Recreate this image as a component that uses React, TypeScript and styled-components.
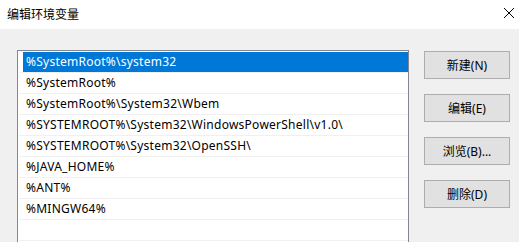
import React from "react";
import styled, { createGlobalStyle } from "styled-components";

const Global = createGlobalStyle`
  html, body { margin: 0; padding: 0; }
  body {
    background: #f0f0f0;
    font-family: "Noto Sans", "Noto Sans CJK SC", sans-serif;
    font-size: 12px;
    color: #000;
    overflow: hidden;
  }
`;

const Window = styled.div`
  width: 519px;
  height: 242px;
  display: flex;
  flex-direction: column;
  overflow: hidden;
`;

const TitleBar = styled.div`
  height: 29px;
  background: #fff;
  display: flex;
  align-items: center;
  justify-content: space-between;
  padding: 0 5px 0 7px;
  flex-shrink: 0;
`;

const Title = styled.span`
  font-size: 12px;
  line-height: 29px;
  font-family: "Noto Sans CJK SC", sans-serif;
  margin-top: -2px;
`;

const Close = styled.div`
  width: 10px;
  height: 10px;
  display: flex;
  margin-top: -3px;
`;

const Body = styled.div`
  display: flex;
  padding: 21px 0 0 17px;
  gap: 15px;
  flex: 1;
  min-height: 0;
`;

const ListBox = styled.div`
  width: 390px;
  height: 220px;
  border: 1px solid #828790;
  background: #fff;
  padding-top: 1px;
  box-sizing: content-box;
  flex-shrink: 0;
`;

const Row = styled.div`
  height: 20px;
  margin-left: 1px;
  border-bottom: 1px solid #f0f0f0;
  display: flex;
`;

const Cell = styled.div<{ $selected?: boolean }>`
  flex: 1;
  margin-left: 4px;
  padding-left: 3px;
  line-height: 20px;
  font-size: 12px;
  letter-spacing: 0.25px;
  white-space: nowrap;
  background: ${(p) => (p.$selected ? "#0078d7" : "transparent")};
  color: ${(p) => (p.$selected ? "#fff" : "#000")};
`;

const Buttons = styled.div`
  display: flex;
  flex-direction: column;
  gap: 15px;
  padding-top: 1px;
`;

const Button = styled.button`
  width: 86px;
  height: 28px;
  background: #e1e1e1;
  border: 1px solid #adadad;
  font-family: "Noto Sans", "Noto Sans CJK SC", sans-serif;
  font-size: 12px;
  color: #000;
  padding: 0;
  margin: 0;
`;

const items = [
  "%SystemRoot%\\system32",
  "%SystemRoot%",
  "%SystemRoot%\\System32\\Wbem",
  "%SYSTEMROOT%\\System32\\WindowsPowerShell\\v1.0\\",
  "%SYSTEMROOT%\\System32\\OpenSSH\\",
  "%JAVA_HOME%",
  "%ANT%",
  "%MINGW64%",
  "",
  "",
];

export default function App() {
  return (
    <Window>
      <Global />
      <TitleBar>
        <Title>编辑环境变量</Title>
        <Close>
          <svg width="10" height="10" viewBox="0 0 10 10">
            <path d="M0 0 L10 10 M10 0 L0 10" stroke="#000" strokeWidth="1" fill="none" />
          </svg>
        </Close>
      </TitleBar>
      <Body>
        <ListBox>
          {items.map((t, i) => (
            <Row key={i}>
              <Cell $selected={i === 0}>{t}</Cell>
            </Row>
          ))}
        </ListBox>
        <Buttons>
          <Button>新建(N)</Button>
          <Button>编辑(E)</Button>
          <Button>浏览(B)...</Button>
          <Button>删除(D)</Button>
        </Buttons>
      </Body>
    </Window>
  );
}
